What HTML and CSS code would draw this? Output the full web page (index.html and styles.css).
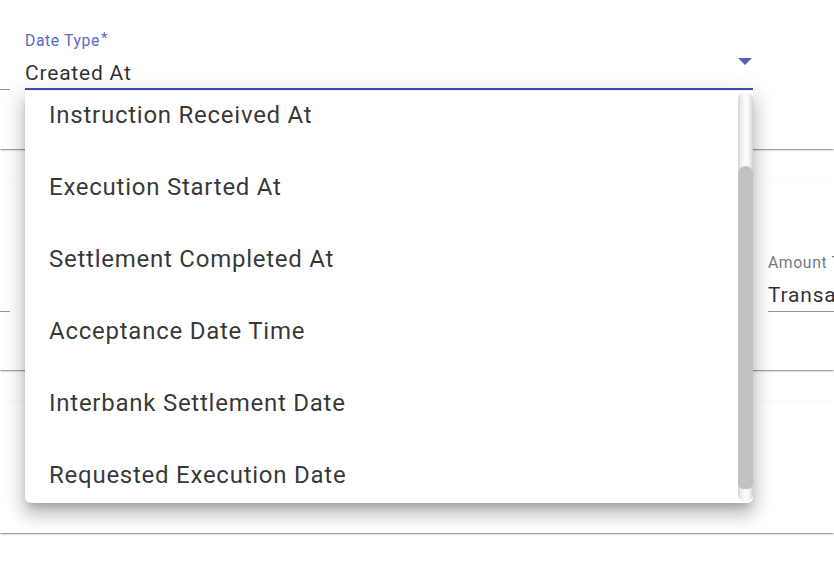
FILE: index.html
```html
<!DOCTYPE html>
<html lang="en">
<head>
<meta charset="utf-8">
<title>Date Type</title>
<link rel="stylesheet" href="styles.css">
</head>
<body>
<main class="page">
  <section class="card card-top">
    <div class="row">
      <div class="field">
        <div class="label">&nbsp;</div>
        <div class="control"><span class="value">&nbsp;</span></div>
      </div>
      <div class="field field-open">
        <div class="label label-focus">Date Type<span class="req">*</span></div>
        <div class="control control-focus">
          <span class="value">Created At</span>
          <span class="arrow"></span>
        </div>
        <div class="panel">
          <ul class="options">
            <li class="option">Instruction Received At</li>
            <li class="option">Execution Started At</li>
            <li class="option">Settlement Completed At</li>
            <li class="option">Acceptance Date Time</li>
            <li class="option">Interbank Settlement Date</li>
            <li class="option">Requested Execution Date</li>
          </ul>
          <div class="scrollbar"><div class="thumb"></div></div>
        </div>
      </div>
      <div class="field"></div>
    </div>
  </section>
  <section class="card card-mid">
    <div class="row">
      <div class="field">
        <div class="label">&nbsp;</div>
        <div class="control"><span class="value">&nbsp;</span></div>
      </div>
      <div class="field"></div>
      <div class="field">
        <div class="label">Amount Type</div>
        <div class="control"><span class="value">Transaction Amount</span></div>
      </div>
    </div>
  </section>
  <section class="card card-low"></section>
</main>
</body>
</html>
```
FILE: styles.css
```css
* { box-sizing: border-box; }
html, body { margin: 0; padding: 0; background: #fff; overflow: hidden; }
body {
  font-family: Roboto, "Liberation Sans", Arial, sans-serif;
  color: rgba(0, 0, 0, 0.82);
  width: 834px;
  height: 566px;
}
.page { display: flex; flex-direction: column; }
.card {
  background: #fff;
  box-shadow: 0 2px 1px -1px rgba(0,0,0,.2), 0 1px 1px 0 rgba(0,0,0,.14), 0 1px 3px 0 rgba(0,0,0,.12);
}
.card-top { height: 149px; padding-top: 32px; }
.card-mid { height: 190px; margin-top: 31px; padding-top: 74px; }
.card-low { height: 132px; margin-top: 31px; }

.row {
  display: grid;
  grid-template-columns: repeat(3, 728px);
  column-gap: 15px;
  margin-left: -718px;
}
.field { position: relative; }
.label {
  font-size: 15.75px;
  line-height: 18px;
  height: 18px;
  color: #7a7a7a;
  letter-spacing: 0.6px;
  white-space: nowrap;
}
.label-focus { color: #5a68c4; }
.req { font-size: 15px; margin-left: 1px; position: relative; top: -3px; }
.control {
  display: flex;
  margin-top: 11px;
  padding-bottom: 4px;
  border-bottom: 1px solid #949494;
}
.control-focus { padding-bottom: 3px; border-bottom: 2px solid #3f51b5; }
.value {
  flex: 1;
  font-size: 21px;
  line-height: 24px;
  height: 24px;
  white-space: nowrap;
  overflow: hidden;
  letter-spacing: 0.8px;
}
.arrow {
  align-self: flex-start;
  margin-top: -3px;
  margin-right: 1px;
  width: 0;
  height: 0;
  border-left: 7px solid transparent;
  border-right: 7px solid transparent;
  border-top: 7px solid #5260c0;
}
.panel {
  position: absolute;
  left: 0;
  top: calc(100% + 1px);
  width: 728px;
  height: 412px;
  overflow: hidden;
  background: #fff;
  border-radius: 0 0 6px 6px;
  box-shadow: 0 7px 8px -4px rgba(0,0,0,.2), 0 12px 16px 2px rgba(0,0,0,.14), 0 5px 22px 4px rgba(0,0,0,.12);
  z-index: 5;
}
.options { list-style: none; margin: -12px 0 0; padding: 0; }
.option {
  height: 72px;
  line-height: 72px;
  padding: 0 24px;
  font-size: 24px;
  letter-spacing: 0.75px;
  color: rgba(0, 0, 0, 0.8);
  white-space: nowrap;
}
.scrollbar {
  position: absolute;
  top: 0;
  right: 0;
  bottom: 0;
  width: 15px;
  background: #fff;
}
.scrollbar::before {
  content: "";
  position: absolute;
  left: 0; right: 0; top: 1px; bottom: 1px;
  border-radius: 8px;
  background: linear-gradient(90deg, #d4d4d4 0, #ededed 20%, #fbfbfb 45%, #fbfbfb 60%, #ececec 82%, #cfcfcf 100%);
}
.thumb {
  position: absolute;
  left: 0; right: 0;
  top: 75px;
  bottom: 14px;
  border-radius: 8px 8px 6px 6px;
  background: #c1c1c1;
}
```
